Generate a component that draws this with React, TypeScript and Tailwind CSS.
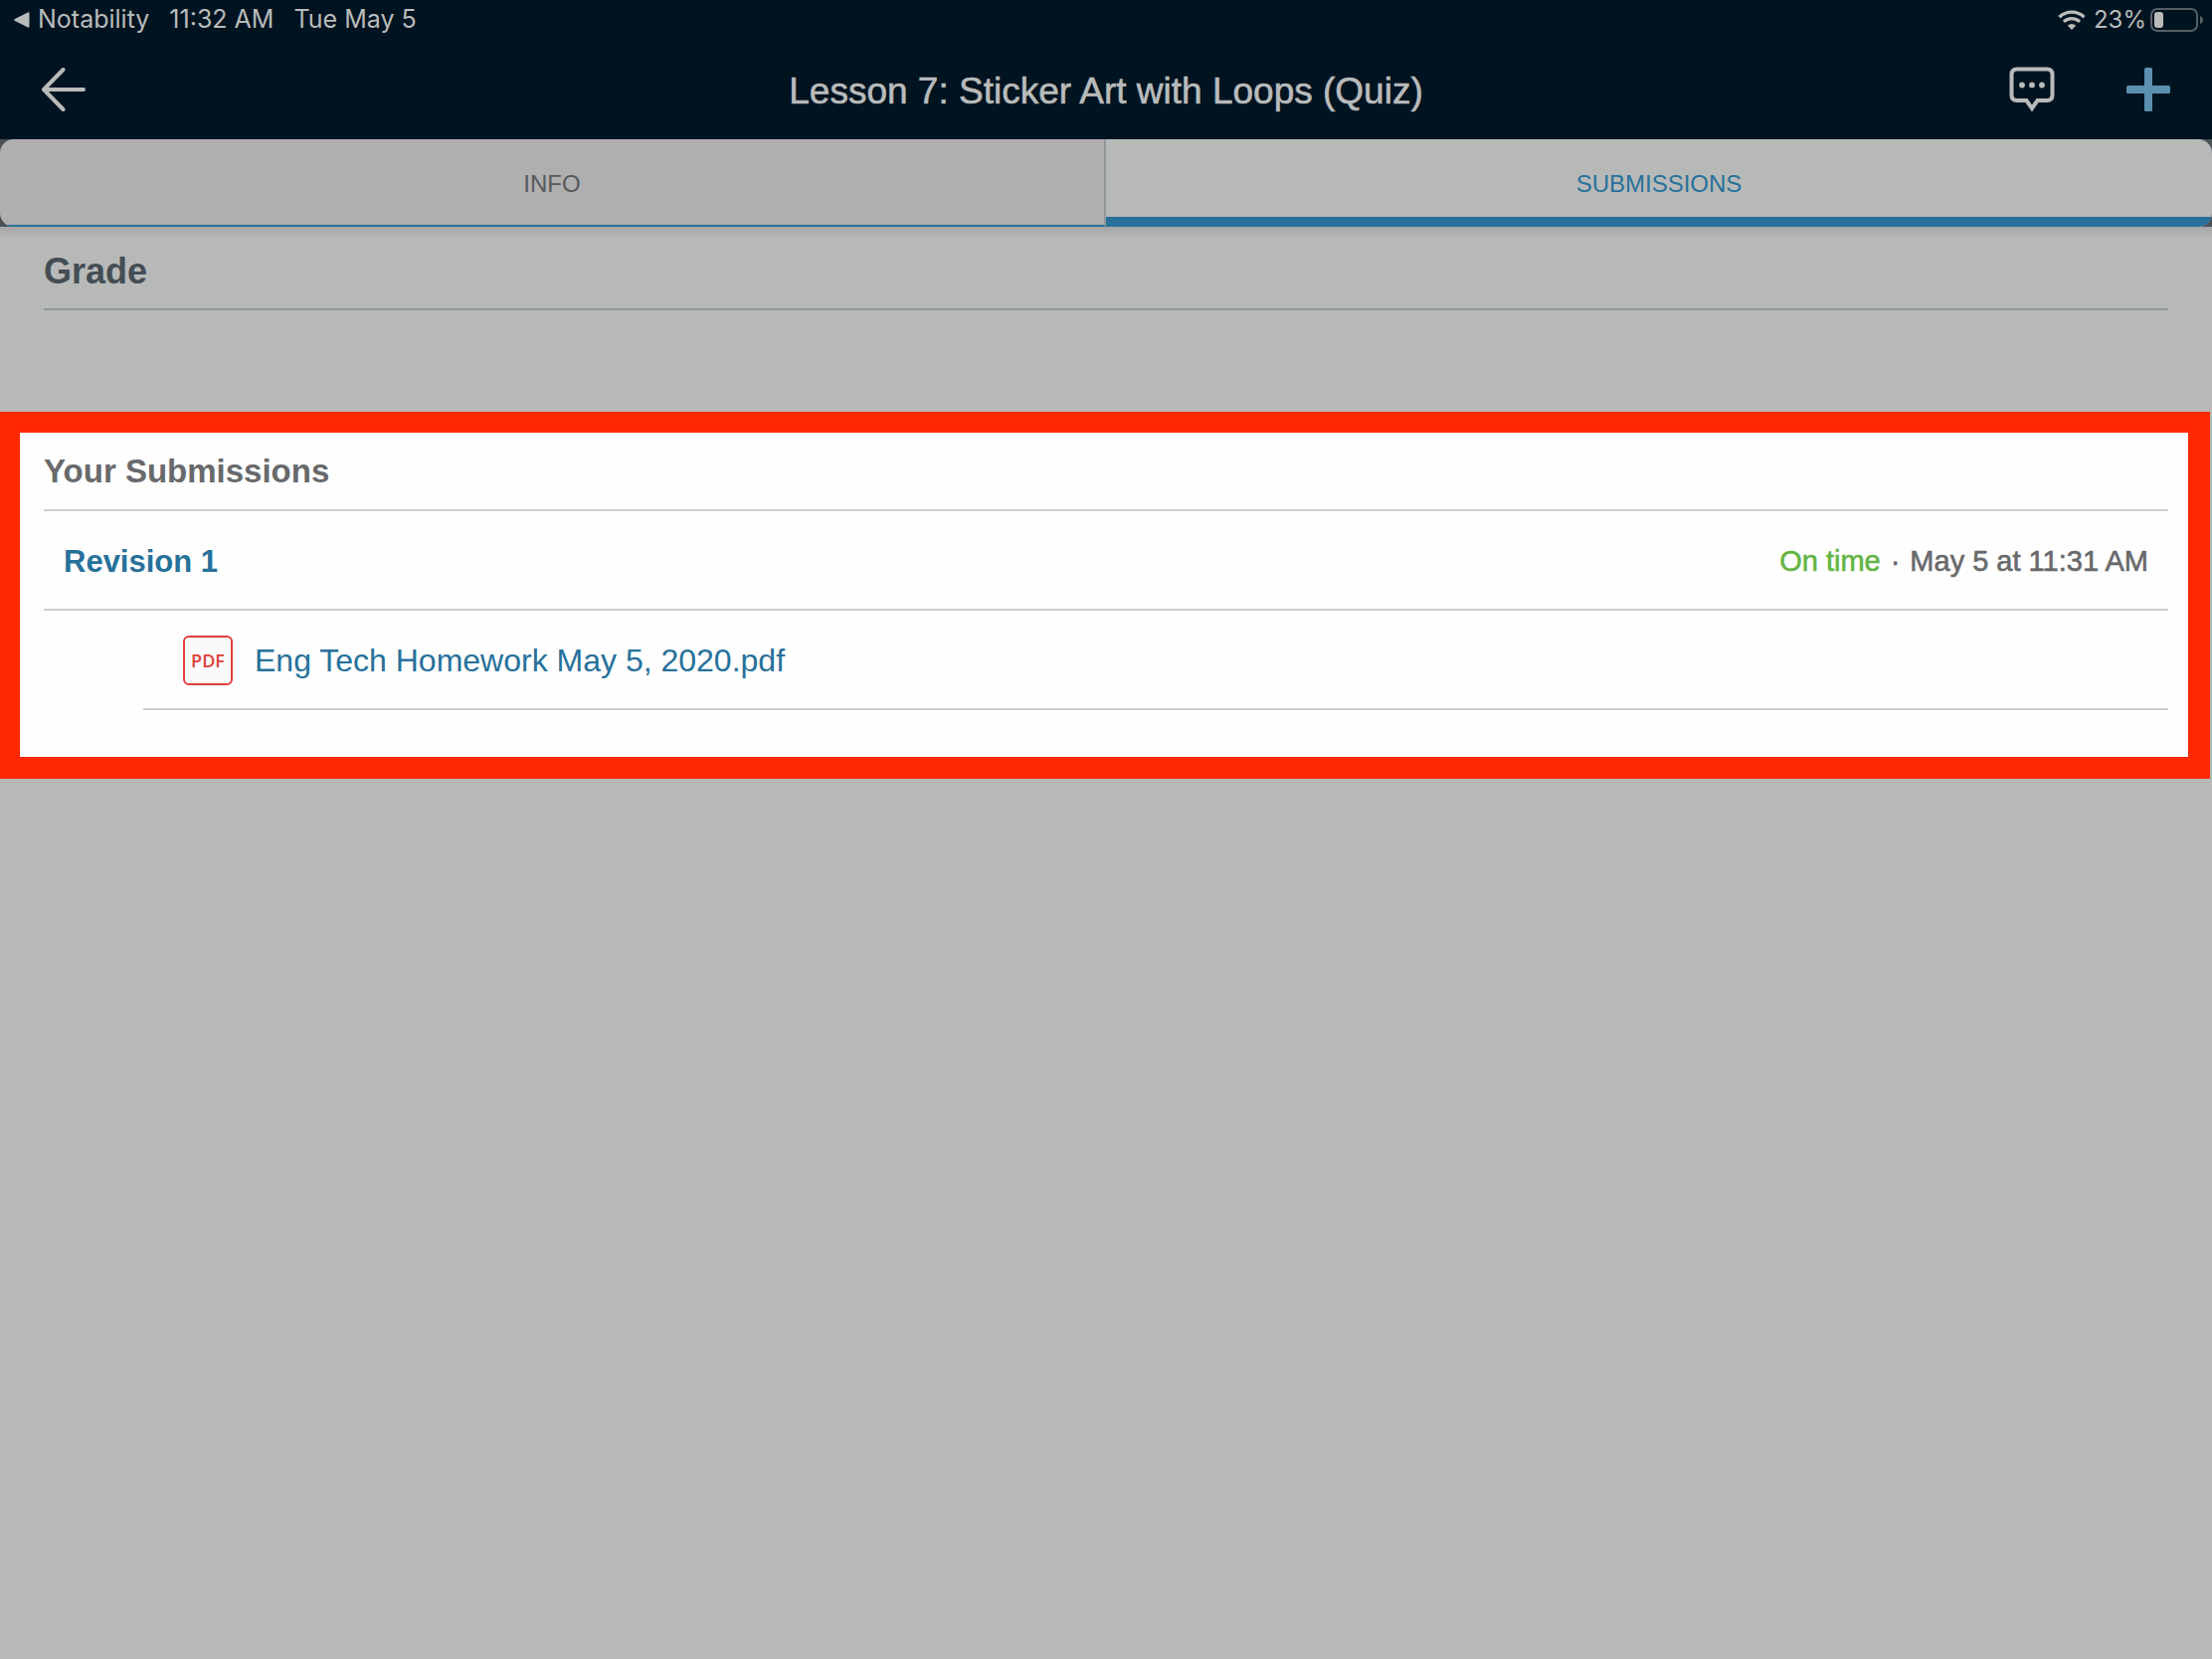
function StatusBar() {
  return (
    <div className="flex h-10 items-center justify-between pl-3.5 pr-2 font-['Inter',sans-serif] text-2xl text-[#b9bbbb]">
      <div className="flex items-center gap-5 text-[25px]">
        <a href="#notability" className="flex items-center gap-2">
          <svg width="16" height="16" viewBox="0 0 16 16" fill="currentColor">
            <path d="M1 7 14 .4Q15.5 0 15.5 1.500V14.500Q15.500 16 14 15.600L1 9Q-.6 8 1 7Z" />
          </svg>
          Notability
        </a>
        <span>11:32 AM</span>
        <span>Tue May 5</span>
      </div>

      <div className="flex items-center">
        <svg width="28" height="20" viewBox="0 0 28 20" fill="none" stroke="currentColor" strokeWidth="3.400">
          <path d="M1.500 7.200A18 18 0 0 1 26.500 7.200" />
          <path d="M6 11.900A11.500 11.500 0 0 1 22 11.900" />
          <path d="M14 20 9.800 15.700A6 6 0 0 1 18.200 15.700Z" fill="currentColor" stroke="none" />
        </svg>
        <span className="ml-2 mr-1">23%</span>
        <svg width="54" height="24" viewBox="0 0 54 24" fill="none">
          <rect x="1" y="1" width="46" height="22" rx="6" stroke="#575f65" strokeWidth="2" />
          <rect x="4" y="4" width="9" height="16" rx="3" fill="#b9bbbb" />
          <path d="M50 8Q53 9 53 12T50 16Z" fill="#575f65" />
        </svg>
      </div>
    </div>
  );
}

function NavBar() {
  return (
    <div className="grid h-[100px] grid-cols-[1fr_auto_1fr] items-center px-[42px] text-[#b9bbbb]">
      <button aria-label="Back" className="justify-self-start">
        <svg width="46" height="44" viewBox="0 0 46 44" fill="none" stroke="currentColor" strokeWidth="4" strokeLinecap="round" strokeLinejoin="round">
          <path d="M42 22H2M21.500 2 2 22l19.500 20" />
        </svg>
      </button>

      <h1 className="pt-1 text-[37px] [-webkit-text-stroke:0.6px_currentColor]">
        Lesson 7: Sticker Art with Loops (Quiz)
      </h1>

      <div className="flex items-center gap-[72px] justify-self-end">
        <button aria-label="Comments">
          <svg width="46" height="46" viewBox="0 0 46 46" fill="none" stroke="currentColor" strokeWidth="4">
            <path d="M8 2.500H38Q43.500 2.500 43.500 8V28.500Q43.500 34 38 34H28.500L23 42 17.500 34H8Q2.500 34 2.500 28.500V8Q2.500 2.500 8 2.500Z" />
            <g fill="currentColor" stroke="none">
              <circle cx="13" cy="18.500" r="2.900" />
              <circle cx="23" cy="18.500" r="2.900" />
              <circle cx="33" cy="18.500" r="2.900" />
            </g>
          </svg>
        </button>
        <button aria-label="Add" className="text-[#5b90b0]">
          <svg width="44" height="44" viewBox="0 0 44 44" fill="currentColor">
            <rect x="18" width="8" height="44" rx="1.500" />
            <rect y="18" width="44" height="8" rx="1.500" />
          </svg>
        </button>
      </div>
    </div>
  );
}

function Tabs() {
  return (
    <div className="bg-[#4a5157]">
      <div role="tablist" className="grid h-[88px] grid-cols-2 overflow-hidden rounded-[14px] text-2xl">
        <button
          role="tab"
          aria-selected="false"
          className="border-r-2 border-b-2 border-r-[#91979a] border-b-[#27719b] bg-[#afafaf] pt-1 text-[#55595c]"
        >
          INFO
        </button>
        <button
          role="tab"
          aria-selected="true"
          className="border-b-[10px] border-[#27719b] bg-[#b7b9b8] pt-3 text-[#27719b]"
        >
          SUBMISSIONS
        </button>
      </div>
    </div>
  );
}

export default function App() {
  return (
    <div className="flex min-h-screen flex-col bg-[#b7b9b8] font-['Liberation_Sans',Arial,sans-serif]">
      <header className="bg-[#001320]">
        <StatusBar />
        <NavBar />
      </header>

      <Tabs />

      <main>
        <div className="h-3 bg-linear-to-b from-[#a7a7a7] to-[#b7b9b8]" />

        {/* Grade */}
        <section className="h-[174px] px-11">
          <h2 className="flex h-[72px] items-center border-b-2 border-[#90979b] pb-1 text-4xl font-bold text-[#444d53]">
            Grade
          </h2>
        </section>

        {/* Submissions */}
        <section className="mr-0.5 border-t-[21px] border-r-[22px] border-b-[22px] border-l-[20px] border-[#ff2800] bg-[#fefefe] pb-[47px] pl-6 pr-5">
          <h2 className="flex h-[79px] items-center border-b-2 border-[#cccfce] text-[33px] font-bold text-[#68696b]">
            Your Submissions
          </h2>

          <div className="flex h-[100px] items-center justify-between border-b-2 border-[#cccfce] px-5 pt-1">
            <h3 className="text-[31px] font-bold text-[#27719b]">
              <a href="#revision-1">Revision 1</a>
            </h3>
            <p className="flex gap-2.5 text-[29px] text-[#68696b] [-webkit-text-stroke:0.6px_currentColor]">
              <span className="text-[#65b545]">On time</span>
              <span>·</span>
              <span>May 5 at 11:31 AM</span>
            </p>
          </div>

          <ul className="ml-[100px]">
            <li className="flex h-[100px] items-center border-b-2 border-[#cccfce] pl-10 pt-0.5">
              <a href="#file" className="flex items-center gap-[22px] text-[32px] text-[#27719b]">
                <span className="flex size-[50px] items-center justify-center rounded-md border-2 border-[#df3f3a] bg-[#fafafa] font-['Open_Sans',sans-serif] text-lg font-semibold text-[#df3f3a]">
                  PDF
                </span>
                Eng Tech Homework May 5, 2020.pdf
              </a>
            </li>
          </ul>
        </section>
      </main>
    </div>
  );
}
